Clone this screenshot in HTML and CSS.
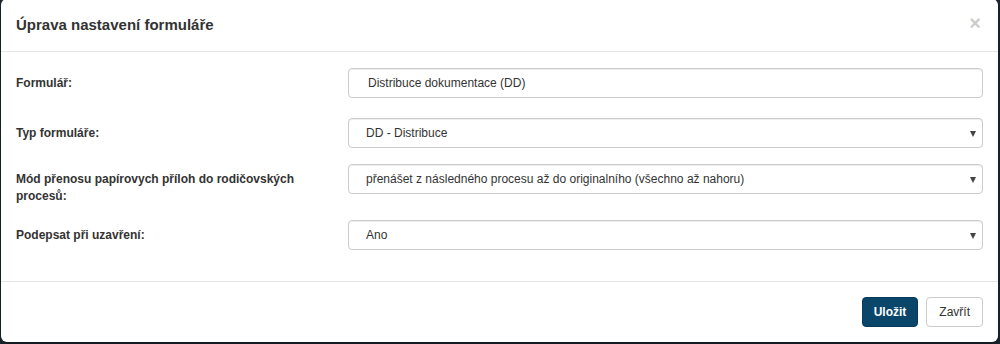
FILE: index.html
```html
<!DOCTYPE html>
<html lang="cs">
<head>
    <meta charset="UTF-8">
    <title>Úprava nastavení formuláře</title>
    <link rel="stylesheet" href="styles.css">
</head>
<body>
    <div class="modal">
        <!-- Header -->
        <div class="modal-header">
            <h4 class="modal-title">Úprava nastavení formuláře</h4>
            <span class="close">&times;</span>
        </div>

        <!-- Body -->
        <form class="modal-body">
            <div class="form-row first">
                <label>Formulář:</label>
                <input class="control text" type="text" value="Distribuce dokumentace (DD)">
            </div>
            <div class="form-row">
                <label>Typ formuláře:</label>
                <div class="select-wrap">
                    <select class="control">
                        <option>DD - Distribuce</option>
                    </select>
                </div>
            </div>
            <div class="form-row tall">
                <label>Mód přenosu papírovych příloh do rodičovských procesů:</label>
                <div class="select-wrap">
                    <select class="control">
                        <option>přenášet z následného procesu až do originalního (všechno až nahoru)</option>
                    </select>
                </div>
            </div>
            <div class="form-row">
                <label>Podepsat při uzavření:</label>
                <div class="select-wrap">
                    <select class="control">
                        <option>Ano</option>
                    </select>
                </div>
            </div>
        </form>

        <!-- Footer -->
        <div class="modal-footer">
            <button class="btn btn-primary" type="button">Uložit</button>
            <button class="btn btn-default" type="button">Zavřít</button>
        </div>
    </div>
</body>
</html>
```

FILE: styles.css
```css
/* General Reset */
body {
    margin: 0;
    padding: 0;
    font-family: 'Liberation Sans', Arial, sans-serif;
    font-size: 12px;
    color: #333;
    background: #1c2a33;
    height: 344px;
    overflow: hidden;
}

/* Modal */
.modal {
    margin: -1px 2px 0 1px;
    background: #fff;
    border-radius: 6px;
    box-shadow: 0 3px 9px rgba(0, 0, 0, 0.5);
}

.modal-header {
    display: flex;
    justify-content: space-between;
    align-items: center;
    padding: 15px;
    border-bottom: 1px solid #e5e5e5;
}

.modal-title {
    margin: 0;
    font-size: 15px;
    line-height: 22px;
    font-weight: bold;
}

.close {
    font-size: 20px;
    font-weight: bold;
    line-height: 1;
    color: #000;
    opacity: 0.2;
    margin-right: 2px;
    margin-top: -4px;
}

/* Form */
.modal-body {
    padding: 16px 15px 15px;
}

.form-row {
    display: grid;
    grid-template-columns: 302px 1fr;
    column-gap: 30px;
    align-items: start;
    margin-bottom: 16px;
}

.form-row.first {
    margin-bottom: 20px;
}

.form-row.tall {
    margin-bottom: 15px;
}

.form-row label {
    font-weight: bold;
    padding-top: 7px;
    line-height: 17px;
}

.control {
    display: block;
    width: 100%;
    box-sizing: border-box;
    height: 30px;
    padding: 0 30px 0 17px;
    font-family: inherit;
    font-size: 12px;
    color: #333;
    background: #fff;
    border: 1px solid #ccc;
    border-radius: 4px;
    box-shadow: inset 0 1px 1px rgba(0, 0, 0, 0.075);
    -webkit-appearance: none;
    appearance: none;
    outline: none;
}

.control.text {
    padding-left: 19px;
}

.select-wrap {
    position: relative;
}

.select-wrap::after {
    content: "";
    position: absolute;
    right: 7px;
    top: 13px;
    border-left: 3px solid transparent;
    border-right: 3px solid transparent;
    border-top: 6px solid #444;
}

/* Footer */
.modal-footer {
    display: flex;
    justify-content: flex-end;
    gap: 8px;
    padding: 15px;
    border-top: 1px solid #e5e5e5;
}

.btn {
    height: 30px;
    padding: 0 12px;
    font-family: inherit;
    font-size: 12px;
    border-radius: 4px;
    border: 1px solid #ccc;
    cursor: pointer;
}

.btn-primary {
    background: #0a4669;
    border-color: #08395a;
    color: #fff;
    font-weight: bold;
    padding: 0 11px;
}

.btn-default {
    background: #fff;
    color: #333;
}
```
